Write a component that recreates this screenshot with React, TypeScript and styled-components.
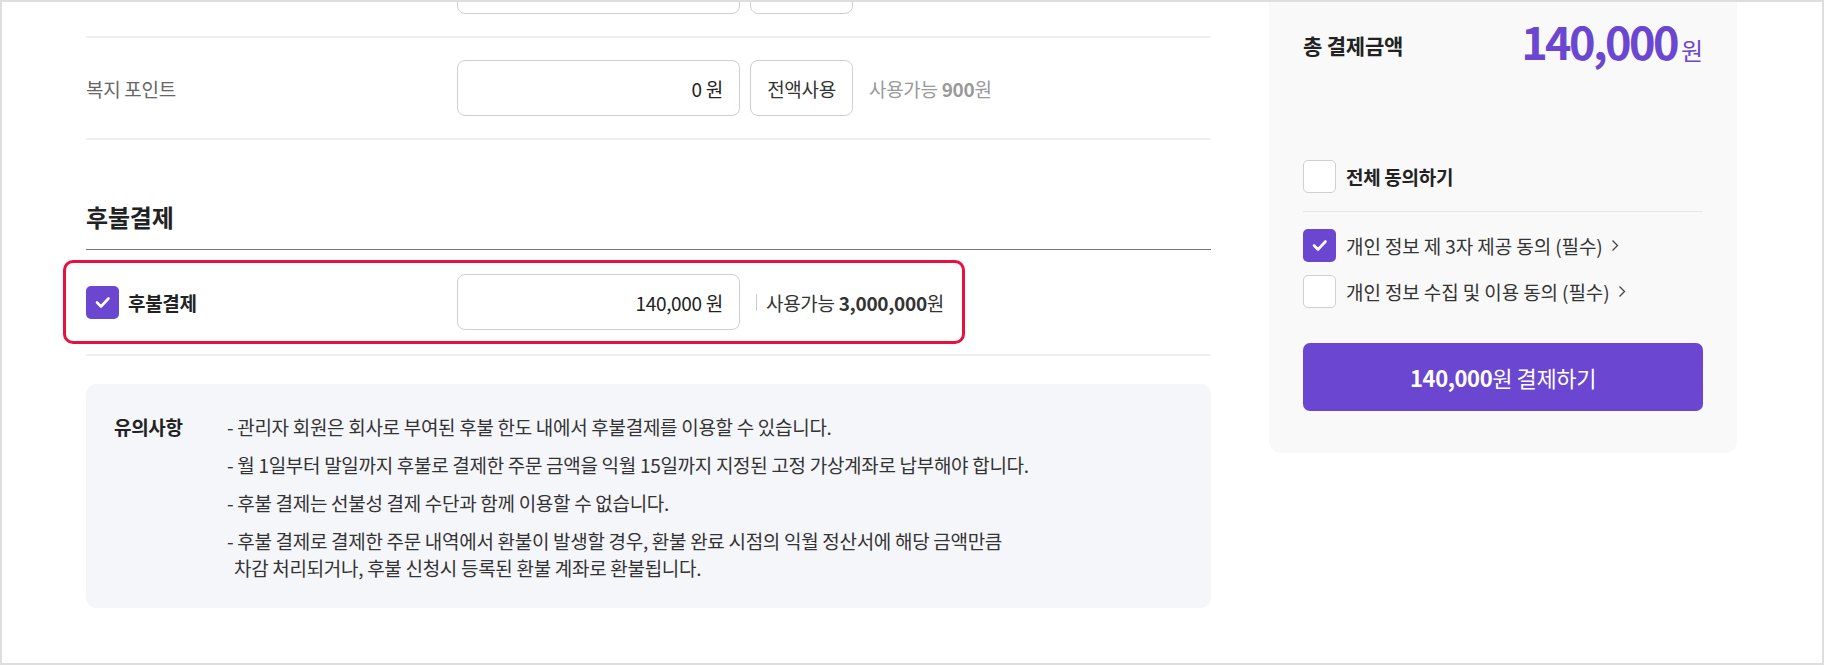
import styled, { createGlobalStyle } from "styled-components";

const PURPLE = "#6b47d1";

const GlobalStyle = createGlobalStyle`
  * { box-sizing: border-box; }
  body {
    margin: 0;
    background: #fff;
    font-family: "Noto Sans CJK KR", "Noto Sans", sans-serif;
    color: #222;
    letter-spacing: -0.3px;
  }
`;

const Frame = styled.div`
  width: 1824px;
  height: 665px;
  border: 2px solid #dedede;
  overflow: hidden;
  background: #fff;
`;

// the page is scrolled down a little, so the content starts above the frame
const Scroller = styled.div`
  display: flex;
  align-items: flex-start;
  gap: 58px;
  margin-top: -66px;
  padding: 0 85px 0 84px;
`;

const MainColumn = styled.section`
  width: 1125px;
  flex-shrink: 0;
`;

const FormRow = styled.div<{ $tall?: boolean }>`
  display: flex;
  align-items: center;
  height: ${(p) => (p.$tall ? "106px" : "102px")};
  border-bottom: 2px solid #efefef;
`;

const RowLabel = styled.div`
  width: 371px;
  font-size: 19px;
  color: #666;
`;

const AmountBox = styled.div`
  width: 283px;
  height: 56px;
  display: flex;
  align-items: center;
  justify-content: flex-end;
  padding-right: 16px;
  border: 1px solid #cfcfcf;
  border-radius: 8px;
  background: #fff;
  font-size: 19px;
  color: #222;
`;

const FullUseButton = styled.button`
  margin-left: 10px;
  width: 103px;
  height: 56px;
  padding: 0;
  border: 1px solid #cfcfcf;
  border-radius: 8px;
  background: #fff;
  font-family: inherit;
  font-size: 19px;
  letter-spacing: -0.3px;
  color: #333;
`;

const Hint = styled.span<{ $muted?: boolean }>`
  margin-left: ${(p) => (p.$muted ? "16px" : "9px")};
  font-size: 19px;
  color: ${(p) => (p.$muted ? "#999" : "#333")};

  strong {
    font-weight: 700;
  }
`;

const SectionTitle = styled.h2`
  margin: 60px 0 0;
  padding-bottom: 15px;
  border-bottom: 1px solid #777;
  font-size: 24px;
  line-height: 34px;
  font-weight: 700;
  letter-spacing: -0.2px;
  color: #222;
`;

const Highlight = styled.div`
  display: flex;
  align-items: center;
  height: 84px;
  margin-left: -23px;
  padding: 0 18px 0 20px;
  border: 3px solid #e8103c;
  border-radius: 10px;
`;

const PayLabel = styled.label`
  width: 371px;
  display: flex;
  align-items: center;
  gap: 9px;
  font-size: 19px;
  font-weight: 700;
  color: #222;
`;

const Divider = styled.span`
  width: 1px;
  height: 17px;
  margin-left: 16px;
  background: #ccc;
`;

const Notice = styled.div`
  display: flex;
  margin-top: 28px;
  padding: 29px 28px 27px;
  border-radius: 10px;
  background: #f5f6fa;
`;

const NoticeTitle = styled.strong`
  width: 113px;
  flex-shrink: 0;
  font-size: 19px;
  line-height: 27px;
  font-weight: 700;
  color: #222;
`;

const NoticeList = styled.ul`
  margin: 0;
  padding: 0;
  list-style: none;
  display: flex;
  flex-direction: column;
  gap: 11px;
`;

const NoticeItem = styled.li`
  padding-left: 7px;
  text-indent: -7px;
  font-size: 19px;
  line-height: 27px;
  color: #333;
`;

const Panel = styled.aside`
  width: 468px;
  flex-shrink: 0;
  padding: 81px 34px 42px;
  border-radius: 12px;
  background: #f9f9f9;
`;

const TotalRow = styled.div`
  display: flex;
  align-items: center;
  justify-content: space-between;
  height: 56px;
`;

const TotalLabel = styled.span`
  font-size: 21px;
  font-weight: 700;
  letter-spacing: -0.2px;
  color: #222;
`;

const TotalAmount = styled.span`
  color: ${PURPLE};
  font-size: 45px;
  font-weight: 700;
  letter-spacing: -2.6px;
  line-height: 56px;

  small {
    margin-left: 4px;
    font-size: 24px;
    font-weight: 400;
    letter-spacing: 0;
  }
`;

const AgreeAll = styled.div`
  display: flex;
  align-items: center;
  gap: 10px;
  margin-top: 87px;
  padding-bottom: 18px;
  border-bottom: 1px solid #e6e6e6;
  font-size: 19px;
  font-weight: 700;
  color: #222;
`;

const AgreeList = styled.div`
  display: flex;
  flex-direction: column;
  gap: 13px;
  padding-top: 17px;
`;

const AgreeItem = styled.div`
  display: flex;
  align-items: center;
  gap: 10px;
  font-size: 19px;
  letter-spacing: -0.1px;
  color: #333;
`;

const AgreeText = styled.span`
  display: inline-flex;
  align-items: center;
  gap: 8px;
`;

const Box = styled.span<{ $checked?: boolean }>`
  width: 33px;
  height: 33px;
  flex-shrink: 0;
  display: inline-flex;
  align-items: center;
  justify-content: center;
  border-radius: 5px;
  border: ${(p) => (p.$checked ? "none" : "1px solid #cfcfcf")};
  background: ${(p) => (p.$checked ? PURPLE : "#fff")};
`;

const PayButton = styled.button`
  width: 100%;
  height: 68px;
  margin-top: 35px;
  border: none;
  border-radius: 7px;
  background: ${PURPLE};
  color: #fff;
  font-family: inherit;
  font-size: 22px;
  letter-spacing: -0.4px;

  strong {
    font-weight: 700;
  }
`;

function Checkbox({ checked }: { checked?: boolean }) {
  return (
    <Box $checked={checked}>
      {checked && (
        <svg width="33" height="33" viewBox="0 0 33 33">
          <polyline
            points="11,16.5 15,20.5 22.5,12.5"
            fill="none"
            stroke="#fff"
            strokeWidth="2.6"
            strokeLinecap="round"
            strokeLinejoin="round"
          />
        </svg>
      )}
    </Box>
  );
}

function Chevron() {
  return (
    <svg width="8" height="13" viewBox="0 0 8 13">
      <polyline points="1.5,1.5 6.5,6.5 1.5,11.5" fill="none" stroke="#444" strokeWidth="1.3" />
    </svg>
  );
}

const notices = [
  "- 관리자 회원은 회사로 부여된 후불 한도 내에서 후불결제를 이용할 수 있습니다.",
  "- 월 1일부터 말일까지 후불로 결제한 주문 금액을 익월 15일까지 지정된 고정 가상계좌로 납부해야 합니다.",
  "- 후불 결제는 선불성 결제 수단과 함께 이용할 수 없습니다.",
];

const agreements = [
  { label: "개인 정보 제 3자 제공 동의 (필수)", checked: true },
  { label: "개인 정보 수집 및 이용 동의 (필수)", checked: false },
];

export default function App() {
  return (
    <>
      <GlobalStyle />
      <Frame>
        <Scroller>
          <MainColumn>
            {/* previous row, scrolled mostly out of view */}
            <FormRow>
              <RowLabel />
              <AmountBox />
              <FullUseButton aria-label="전액사용" />
            </FormRow>
            <FormRow>
              <RowLabel>복지 포인트</RowLabel>
              <AmountBox>0 원</AmountBox>
              <FullUseButton>전액사용</FullUseButton>
              <Hint $muted>
                사용가능 <strong>900</strong>원
              </Hint>
            </FormRow>

            <SectionTitle>후불결제</SectionTitle>
            <FormRow $tall>
              <Highlight>
                <PayLabel>
                  <Checkbox checked />
                  후불결제
                </PayLabel>
                <AmountBox>140,000 원</AmountBox>
                <Divider />
                <Hint>
                  사용가능 <strong>3,000,000</strong>원
                </Hint>
              </Highlight>
            </FormRow>

            <Notice>
              <NoticeTitle>유의사항</NoticeTitle>
              <NoticeList>
                {notices.map((n) => (
                  <NoticeItem key={n}>{n}</NoticeItem>
                ))}
                <NoticeItem>
                  - 후불 결제로 결제한 주문 내역에서 환불이 발생할 경우, 환불 완료 시점의 익월 정산서에 해당 금액만큼
                  <br />
                  차감 처리되거나, 후불 신청시 등록된 환불 계좌로 환불됩니다.
                </NoticeItem>
              </NoticeList>
            </Notice>
          </MainColumn>

          <Panel>
            <TotalRow>
              <TotalLabel>총 결제금액</TotalLabel>
              <TotalAmount>
                140,000<small>원</small>
              </TotalAmount>
            </TotalRow>

            <AgreeAll>
              <Checkbox />
              전체 동의하기
            </AgreeAll>
            <AgreeList>
              {agreements.map((a) => (
                <AgreeItem key={a.label}>
                  <Checkbox checked={a.checked} />
                  <AgreeText>
                    {a.label}
                    <Chevron />
                  </AgreeText>
                </AgreeItem>
              ))}
            </AgreeList>

            <PayButton>
              <strong>140,000</strong>원 결제하기
            </PayButton>
          </Panel>
        </Scroller>
      </Frame>
    </>
  );
}
